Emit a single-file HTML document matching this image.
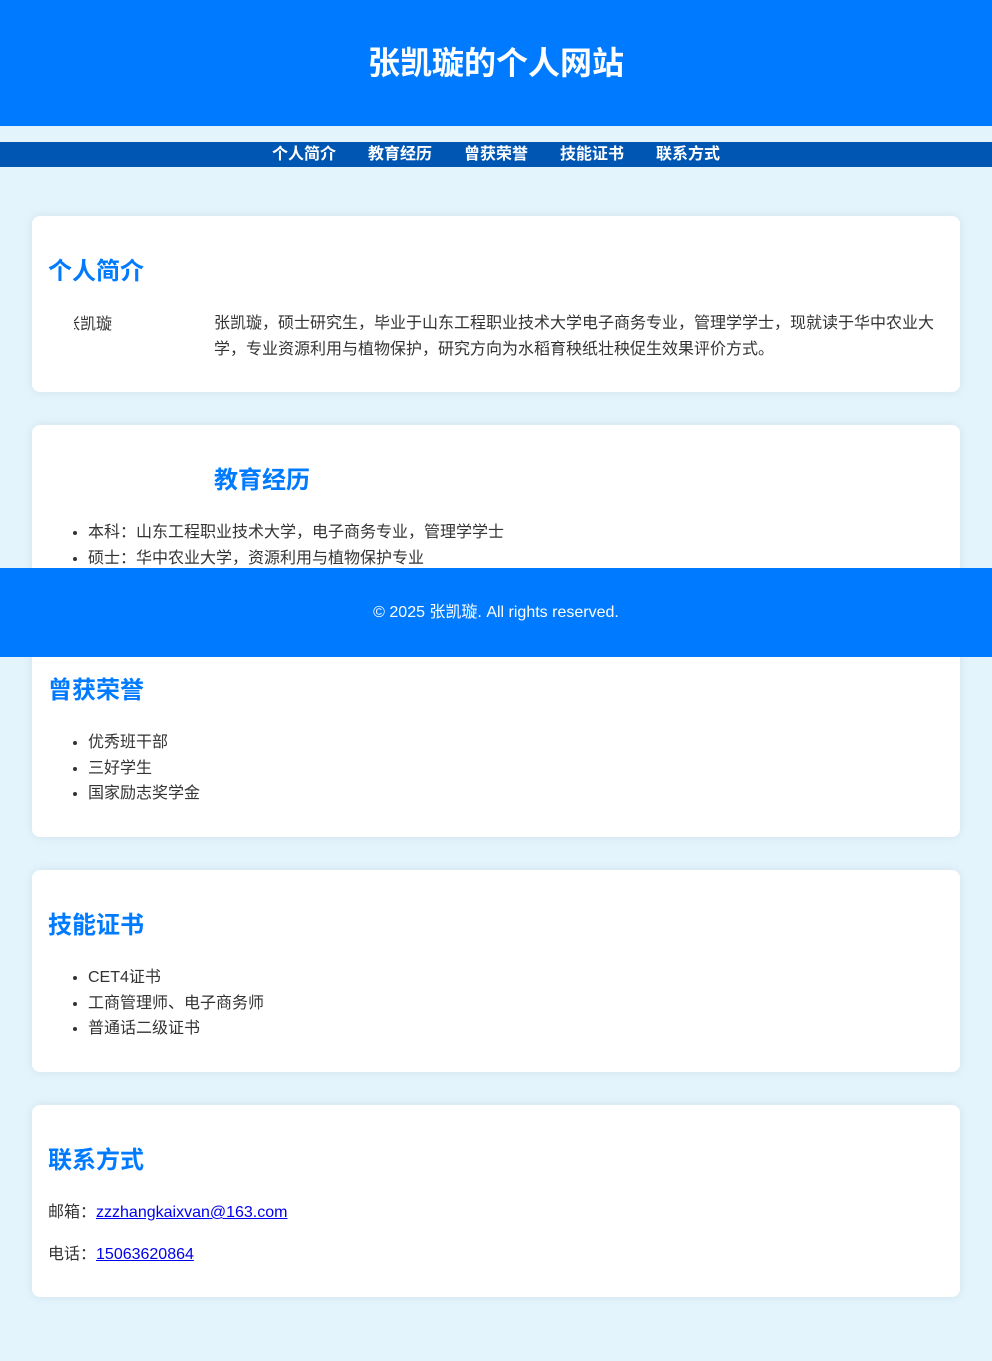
<!DOCTYPE html>
<html><head><meta charset="utf-8"><style>
*{margin:0;padding:0;box-sizing:border-box}
body{width:992px;height:1361px;background:#e3f4fd;font-family:"Liberation Sans","Noto Sans CJK SC",sans-serif;color:#333;position:relative;overflow:hidden}
.a{position:absolute}
header{position:absolute;left:0;top:0;width:992px;height:126px;background:#007bff;color:#fff;text-align:center;font-size:32px;font-weight:bold;line-height:126px}
nav{position:absolute;left:0;top:142px;width:992px;height:25px;background:#0056b3;text-align:center;font-size:16px;font-weight:bold;color:#fff;line-height:25px;word-spacing:0}
nav span{margin:0 16px}
.card{position:absolute;left:32px;width:928px;background:#fff;border-radius:8px;box-shadow:0 0 10px rgba(0,0,0,0.08)}
h2{position:absolute;color:#007bff;font-size:24px;font-weight:bold;line-height:30px}
.t{position:absolute;font-size:16px;line-height:25.5px;white-space:nowrap}
ul{list-style:disc}
a{color:#00e;text-decoration:underline}
footer{position:absolute;left:0;top:568px;width:992px;height:89px;background:#007bff;color:#fff;text-align:center;font-size:16px;line-height:89px}
</style></head><body>
<header>张凯璇的个人网站</header>
<nav><span>个人简介</span><span>教育经历</span><span>曾获荣誉</span><span>技能证书</span><span>联系方式</span></nav>

<div class="card" style="top:216px;height:176px">
<h2 style="left:16px;top:41px">个人简介</h2>
<div class="a" style="left:42px;top:96px;width:40px;overflow:hidden;font-size:16px;line-height:25px;white-space:nowrap"><span style="margin-left:-10px">张凯璇</span></div>
<div class="t" style="left:182px;top:95px;white-space:normal;width:725px">张凯璇，硕士研究生，毕业于山东工程职业技术大学电子商务专业，管理学学士，现就读于华中农业大学，专业资源利用与植物保护，研究方向为水稻育秧纸壮秧促生效果评价方式。</div>
</div>

<div class="card" style="top:425px;height:205px">
<h2 style="left:182px;top:41px">教育经历</h2>
<ul class="t" style="left:56px;top:95px"><li>本科：山东工程职业技术大学，电子商务专业，管理学学士</li><li>硕士：华中农业大学，资源利用与植物保护专业</li></ul>
</div>

<div class="card" style="top:630px;height:207px">
<h2 style="left:16px;top:46px">曾获荣誉</h2>
<ul class="t" style="left:56px;top:100px"><li>优秀班干部</li><li>三好学生</li><li>国家励志奖学金</li></ul>
</div>

<div class="card" style="top:870px;height:202px">
<h2 style="left:16px;top:41px">技能证书</h2>
<ul class="t" style="left:56px;top:95px"><li>CET4证书</li><li>工商管理师、电子商务师</li><li>普通话二级证书</li></ul>
</div>

<div class="card" style="top:1105px;height:192px">
<h2 style="left:16px;top:41px">联系方式</h2>
<div class="t" style="left:16px;top:95px">邮箱：<a>zzzhangkaixvan@163.com</a></div>
<div class="t" style="left:16px;top:137px">电话：<a>15063620864</a></div>
</div>

<footer>© 2025 张凯璇. All rights reserved.</footer>
</body></html>
